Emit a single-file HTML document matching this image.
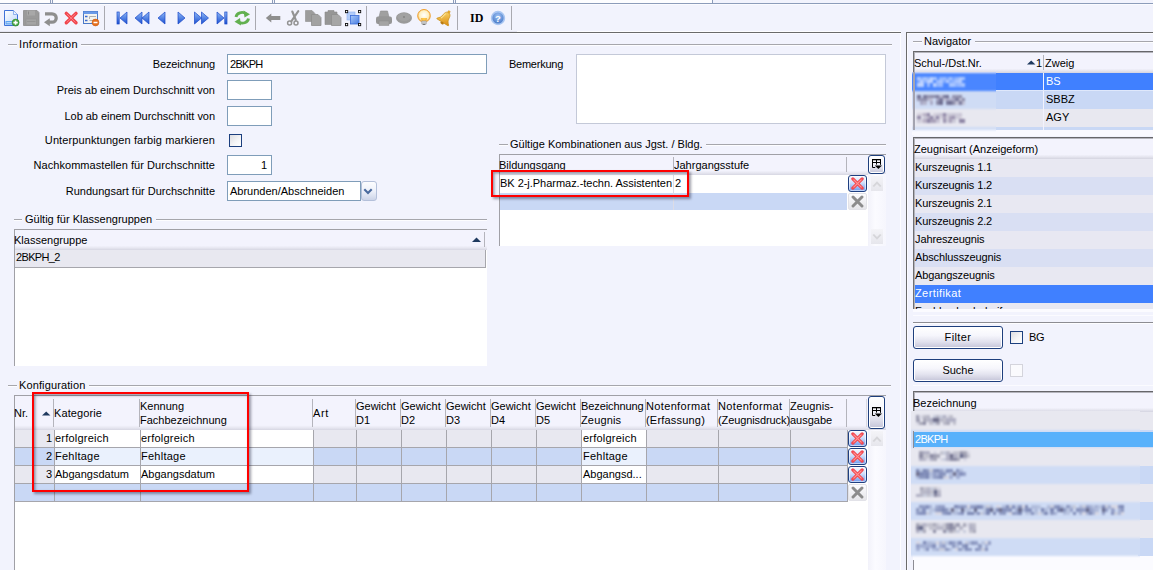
<!DOCTYPE html>
<html lang="de">
<head>
<meta charset="utf-8">
<title>Zeugnisart</title>
<style>
html,body{margin:0;padding:0;}
body{width:1153px;height:570px;overflow:hidden;background:#f2f3fd;position:relative;
 font-family:"Liberation Sans",sans-serif;font-size:11px;color:#000;line-height:13px;}
div,span{box-sizing:border-box;}
.a{position:absolute;}
.t{position:absolute;white-space:nowrap;height:13px;line-height:13px;}
.r{text-align:right;}
.hl{position:absolute;height:1px;background:#a6a6ac;}
.gl{box-shadow:0 1px 0 #fdfdff;}
.vl{position:absolute;width:1px;background:#a6a6ac;}
.inp{position:absolute;background:#fff;border:1px solid #7f9db9;}
.tsep{position:absolute;top:6px;width:1px;height:24px;background:#a9a9b0;}
.ic{position:absolute;top:10px;width:16px;height:16px;}
.gray{background:#e8e8f0;}
.blue{background:#c9d8f5;}
.hs{position:absolute;width:1px;background:#b4b4bc;}
.btn{position:absolute;border:1px solid #1e3f7d;border-radius:3px;background:linear-gradient(#ffffff 0%,#f6f6fc 40%,#e2e2ee 70%,#c4c4d8 100%);text-align:center;box-shadow:inset 0 0 0 1px #fff;}
.cb{position:absolute;width:13px;height:13px;border:1px solid #1c3f7e;background:linear-gradient(135deg,#dcdce0 0%,#f4f4f6 55%,#ffffff 100%);}
.del{position:absolute;width:19px;height:17px;border:1px solid #1f3f80;border-radius:3px;background:linear-gradient(#f6f9ff 0%,#d0dffb 45%,#6c9aee 100%);box-shadow:inset 0 0 0 1px rgba(255,255,255,.55);}
.red{position:absolute;border:2px solid #ff0000;box-shadow:1.5px 1.5px 2.5px rgba(0,0,30,.38),inset 1.5px 1.5px 2.5px rgba(0,0,30,.38);}
.deld{position:absolute;width:19px;height:17px;border:1px solid #e2e2e8;border-radius:2px;background:linear-gradient(#fcfcfe,#e6e6ea);}
.sarr{position:absolute;width:12px;height:15px;background:linear-gradient(#f4f4f8,#e6e6ec);}
.blur{position:absolute;filter:blur(0.8px);opacity:.85;}
</style>
</head>
<body>

<svg width="0" height="0" style="position:absolute"><defs>
<g id="xr"><path d="M2 2 L12 12 M12 2 L2 12" stroke="#f24a52" stroke-width="3.5" stroke-linecap="round"/><path d="M3 3 L11 11 M11 3 L3 11" stroke="#ff9494" stroke-width="1.2" stroke-linecap="round"/></g>
<g id="xg"><path d="M2.2 2.2 L11.8 11.8 M11.8 2.2 L2.2 11.8" stroke="#8c8c8c" stroke-width="3.2" stroke-linecap="round"/></g>
<g id="cfgi"><path d="M0.5 0.5 H8.5 V5.8 M0.5 0.5 V8.5 H3.2 M0.5 3.5 H8.5 M4.5 0.5 V5.6" fill="none" stroke="#000" stroke-width="1"/><path d="M0 0 H9 V1.3 H0 Z" fill="#000"/><path d="M2.8 6.4 H10 L6.4 10 Z" fill="#000"/></g>
</defs></svg>
<!-- top strip -->
<div class="a" style="left:0;top:0;width:712px;height:3px;background:#fdfdff;"></div>
<div class="a" style="left:0;top:3px;width:1153px;height:1px;background:#8c9cba;"></div>
<div class="a" style="left:0;top:4px;width:1153px;height:1px;background:#fbfbff;"></div>
<div class="a" style="left:50px;top:0;width:3px;height:3px;background:#f6f6fe;border-left:1px solid #8c9cba;border-right:1px solid #8c9cba;"></div>
<div class="a" style="left:272px;top:0;width:3px;height:3px;background:#f6f6fe;border-left:1px solid #8c9cba;border-right:1px solid #8c9cba;"></div>
<div class="a" style="left:453px;top:0;width:3px;height:3px;background:#f6f6fe;border-left:1px solid #8c9cba;border-right:1px solid #8c9cba;"></div>
<div class="a" style="left:712px;top:0;width:1px;height:3px;background:#8c9cba;"></div>

<!-- TOOLBAR -->
<div id="toolbar">
<svg class="a" style="left:0;top:4px;" width="520" height="28" viewBox="0 4 520 28">
<defs>
<linearGradient id="gb" x1="0" y1="0" x2="0" y2="1"><stop offset="0" stop-color="#8fbaf8"/><stop offset="1" stop-color="#1b4fd0"/></linearGradient>
<linearGradient id="gdoc" x1="0" y1="0" x2="1" y2="1"><stop offset="0" stop-color="#ffffff"/><stop offset="1" stop-color="#bcd6fa"/></linearGradient>
<linearGradient id="ggold" x1="0" y1="0" x2="1" y2="1"><stop offset="0" stop-color="#ffe27a"/><stop offset="1" stop-color="#d98a10"/></linearGradient>
<radialGradient id="gbulb" cx="0.5" cy="0.45" r="0.6"><stop offset="0" stop-color="#ffffff"/><stop offset="0.6" stop-color="#fff0c0"/><stop offset="1" stop-color="#f0a838"/></radialGradient>
<radialGradient id="ghelp" cx="0.5" cy="0.35" r="0.7"><stop offset="0" stop-color="#9cc0f4"/><stop offset="1" stop-color="#3d6fc0"/></radialGradient>
<linearGradient id="gsel" x1="0" y1="0" x2="1" y2="1"><stop offset="0" stop-color="#a8c8fa"/><stop offset="1" stop-color="#4a7ee0"/></linearGradient>
</defs>
<rect x="104" y="6" width="1" height="24" fill="#a9a9b0"/>
<rect x="255" y="6" width="1" height="24" fill="#a9a9b0"/>
<rect x="366" y="6" width="1" height="24" fill="#a9a9b0"/>
<rect x="457" y="6" width="1" height="24" fill="#a9a9b0"/>
<rect x="511" y="6" width="1" height="24" fill="#a9a9b0"/>
<path d="M4.5 10.5 H13.5 L17.5 14.5 V25.5 H4.5 Z" fill="url(#gdoc)" stroke="#3f72d8" stroke-width="1"/>
<path d="M13.5 10.5 V14.5 H17.5" fill="#eaf2ff" stroke="#6a98e8" stroke-width="0.7"/>
<rect x="5.5" y="21" width="9" height="3.5" fill="#5fa4f2"/>
<rect x="6.5" y="22.3" width="6" height="0.9" fill="#d8eaff"/>
<circle cx="15.6" cy="22.6" r="3.5" fill="#46a440" stroke="#2f8a2c" stroke-width="0.6"/>
<path d="M13.4 22.6 H17.8 M15.6 20.4 V24.8" stroke="#fff" stroke-width="1.6"/>
<path d="M23.5 10.5 H37 L39 12.5 V25.5 H23.5 Z" fill="#9a9a9a" stroke="#8c8c8c" stroke-width="0.8"/>
<rect x="27" y="10.5" width="8" height="5" fill="#a8a8a8"/>
<rect x="28" y="11.5" width="1" height="3" fill="#8a8a8a"/>
<rect x="26" y="19" width="10.5" height="6" fill="#a4a4a4" stroke="#929292" stroke-width="0.6"/>
<path d="M27 21.5 H35.5" stroke="#929292" stroke-width="0.8"/>
<path d="M45 13.8 H52 A4.2 4.2 0 0 1 52 22.2 H49" fill="none" stroke="#8e8e8e" stroke-width="3.3"/>
<path d="M44 22.2 L49.8 18.2 V26.2 Z" fill="#8e8e8e"/>
<path d="M66.3 13.4 L76 22.8 M76 13.4 L66.3 22.8" stroke="#f0434a" stroke-width="3.4" stroke-linecap="round"/>
<path d="M67 14 L75.3 22.2 M75.3 14 L67 22.2" stroke="#ff8088" stroke-width="1" stroke-linecap="round"/>
<rect x="83.5" y="11.5" width="14" height="12" fill="#f4f4f0" stroke="#4a78c8" stroke-width="1"/>
<rect x="83.5" y="11.5" width="14" height="2.5" fill="#6a9ae8"/>
<path d="M85 16.5 H87.5 M85 20.5 H87.5" stroke="#3a68d0" stroke-width="1.3"/>
<path d="M89.5 16.5 H96 M89.5 16.5 V19 M89.5 20.5 H94" stroke="#b0b0b0" stroke-width="1"/>
<circle cx="95.5" cy="22.5" r="3.4" fill="#e8701c" stroke="#c85a10" stroke-width="0.6"/>
<path d="M93.5 22.5 H97.5" stroke="#fff" stroke-width="1.5"/>
<rect x="117" y="12" width="2.2" height="12" fill="url(#gb)" stroke="#1a48c8" stroke-width="0.7"/>
<path d="M127 12 L120 18 L127 24 Z" fill="url(#gb)" stroke="#1a48c8" stroke-width="0.7"/>
<path d="M142 12 L135 18 L142 24 Z" fill="url(#gb)" stroke="#1a48c8" stroke-width="0.7"/>
<path d="M149 12 L142 18 L149 24 Z" fill="url(#gb)" stroke="#1a48c8" stroke-width="0.7"/>
<path d="M165 12 L158 18 L165 24 Z" fill="url(#gb)" stroke="#1a48c8" stroke-width="0.7"/>
<path d="M178 12 L185 18 L178 24 Z" fill="url(#gb)" stroke="#1a48c8" stroke-width="0.7"/>
<path d="M194.5 12 L201.5 18 L194.5 24 Z" fill="url(#gb)" stroke="#1a48c8" stroke-width="0.7"/>
<path d="M201.5 12 L208.5 18 L201.5 24 Z" fill="url(#gb)" stroke="#1a48c8" stroke-width="0.7"/>
<path d="M217 12 L224 18 L217 24 Z" fill="url(#gb)" stroke="#1a48c8" stroke-width="0.7"/>
<rect x="224.8" y="12" width="2.2" height="12" fill="url(#gb)" stroke="#1a48c8" stroke-width="0.7"/>
<path d="M236 17 A6 5 0 0 1 246 13.8" fill="none" stroke="#62b050" stroke-width="2.8"/>
<path d="M243.5 10.5 L250 14.2 L244.5 17.5 Z" fill="#62b050"/>
<path d="M248.5 18.5 A6 5 0 0 1 238.5 21.8" fill="none" stroke="#62b050" stroke-width="2.8"/>
<path d="M241 25.5 L234.5 21.8 L240 18 Z" fill="#62b050"/>
<path d="M265.8 18 L271.3 13.6 V16.1 H280.3 V19.9 H271.3 V22.4 Z" fill="#8e8e8e"/>
<path d="M298.3 11.2 L291.3 21.3 M292.3 11.5 L295.8 20" stroke="#939393" stroke-width="2.1" fill="none" stroke-linecap="round"/>
<circle cx="289.6" cy="22.9" r="2" fill="none" stroke="#939393" stroke-width="1.5"/>
<circle cx="296" cy="22.9" r="2" fill="none" stroke="#939393" stroke-width="1.5"/>
<path d="M305.5 10.5 H312 L315 13.5 V21.5 H305.5 Z" fill="#9c9c9c" stroke="#8e8e8e" stroke-width="0.6"/>
<path d="M311.5 14.5 H318 L321 17.5 V25.5 H311.5 Z" fill="#a2a2a2" stroke="#8e8e8e" stroke-width="0.8"/>
<path d="M325 12 H328 V10.5 H334 V12 H337 V24.5 H325 Z" fill="#969696" stroke="#8a8a8a" stroke-width="0.6"/>
<path d="M331.5 14.5 H338 L341 17.5 V25.5 H331.5 Z" fill="#a6a6a6" stroke="#8e8e8e" stroke-width="0.8"/>
<rect x="347" y="12" width="8" height="8" fill="#b4cdf8" stroke="#8ab0f0" stroke-width="0.6"/>
<rect x="350.5" y="15.5" width="8.5" height="8.5" fill="url(#gsel)" stroke="#3a6cd8" stroke-width="0.8"/>
<rect x="345.5" y="10.5" width="2.2" height="2.2" fill="#fff" stroke="#111" stroke-width="0.9"/>
<rect x="358.5" y="10.5" width="2.2" height="2.2" fill="#fff" stroke="#111" stroke-width="0.9"/>
<rect x="345.5" y="23.5" width="2.2" height="2.2" fill="#fff" stroke="#111" stroke-width="0.9"/>
<rect x="358.5" y="23.5" width="2.2" height="2.2" fill="#fff" stroke="#111" stroke-width="0.9"/>
<path d="M379 17 L380.5 11 H387.5 L389 17 Z" fill="#a0a0a0" stroke="#8e8e8e" stroke-width="0.6"/>
<rect x="376" y="16.5" width="16" height="7.5" rx="2" fill="#969696"/>
<rect x="379" y="21" width="10" height="4.5" fill="#a4a4a4" stroke="#8c8c8c" stroke-width="0.5"/>
<ellipse cx="404" cy="18" rx="8" ry="5.8" fill="#9a9a9a"/>
<ellipse cx="404" cy="17" rx="6.5" ry="4" fill="#a2a2a2"/>
<circle cx="404" cy="17" r="0.9" fill="#808080"/>
<circle cx="424" cy="15.8" r="6.3" fill="url(#gbulb)" stroke="#f0a030" stroke-width="1"/>
<path d="M421.5 18 L422 21 H426 L426.5 18" fill="#ffc84a" stroke="#e89820" stroke-width="0.6"/>
<rect x="421.8" y="21" width="4.4" height="3" fill="#c8c8c8" stroke="#9a9a9a" stroke-width="0.5"/>
<rect x="422.6" y="24" width="2.8" height="1" fill="#777"/>
<g transform="translate(445.3 17.8) rotate(32) scale(0.9) translate(-443.5 -17.5)"><path d="M443.5 10.8 C440.6 10.8 439.8 13.2 439.6 16 C439.4 18.8 438.2 20.6 436 22.4 V23.4 H451 V22.4 C448.8 20.6 447.6 18.8 447.4 16 C447.2 13.2 446.4 10.8 443.5 10.8 Z" fill="url(#ggold)" stroke="#c98c16" stroke-width="0.7"/><circle cx="443.5" cy="9.8" r="1.3" fill="#eeb030" stroke="#c98c16" stroke-width="0.5"/><ellipse cx="443.5" cy="24.2" rx="2.1" ry="1.3" fill="#b87a10"/><path d="M441.3 13.5 C440.9 15.5 440.8 18 439.6 20.4" fill="none" stroke="#fff3b8" stroke-width="1.1" opacity=".8"/></g>
<circle cx="498" cy="18" r="6.4" fill="url(#ghelp)" stroke="#a9c6f2" stroke-width="1.6"/>
<text x="498" y="21.6" font-family="Liberation Sans, sans-serif" font-size="9.5" font-weight="bold" fill="#fff" text-anchor="middle">?</text>
</svg>
<div class="t" style="left:470px;top:11px;font-family:'Liberation Serif',serif;font-weight:bold;font-size:12px;line-height:14px;height:14px;">ID</div>
</div>

<!-- toolbar bottom line -->
<div class="a" style="left:0;top:31px;width:517px;height:1px;background:#e6e6f2;"></div>
<div class="a" style="left:517px;top:31px;width:384px;height:1px;background:#fdfdff;"></div>
<div class="a" style="left:0;top:32px;width:901px;height:1px;background:#6a6a6a;"></div>
<div class="a" style="left:0;top:33px;width:900px;height:1px;background:#fafaff;"></div>
<div class="a" style="left:906px;top:32px;width:247px;height:1px;background:#6a6a6a;"></div>

<!-- LEFT MAIN -->
<div id="main">
<!-- Information group -->
<div class="hl gl" style="left:8px;top:44px;width:9px;"></div>
<div class="t" style="left:19px;top:38px;letter-spacing:0.35px;">Information</div>
<div class="hl gl" style="left:81px;top:44px;width:811px;"></div>

<div class="t r" style="left:0;width:215px;top:58px;letter-spacing:-0.12px;">Bezeichnung</div>
<div class="inp" style="left:227px;top:54px;width:260px;height:20px;"></div>
<div class="t" style="left:230px;top:58px;letter-spacing:-0.7px;">2BKPH</div>

<div class="t r" style="left:0;width:215px;top:84px;">Preis ab einem Durchschnitt von</div>
<div class="inp" style="left:227px;top:80px;width:45px;height:20px;"></div>

<div class="t r" style="left:0;width:215px;top:110px;letter-spacing:-0.04px;">Lob ab einem Durchschnitt von</div>
<div class="inp" style="left:227px;top:106px;width:45px;height:20px;"></div>

<div class="t r" style="left:0;width:215px;top:134px;letter-spacing:0.1px;">Unterpunktungen farbig markieren</div>
<div class="cb" style="left:229px;top:134px;"></div>

<div class="t r" style="left:0;width:215px;top:159px;letter-spacing:0.05px;">Nachkommastellen für Durchschnitte</div>
<div class="inp" style="left:227px;top:155px;width:45px;height:20px;"></div>
<div class="t r" style="left:227px;width:40px;top:159px;">1</div>

<div class="t r" style="left:0;width:215px;top:185px;">Rundungsart für Durchschnitte</div>
<div class="inp" style="left:227px;top:181px;width:134px;height:20px;"></div>
<div class="t" style="left:230px;top:185px;">Abrunden/Abschneiden</div>
<div class="a" style="left:361px;top:181px;width:16px;height:20px;border:1px solid #b4c0da;border-radius:3px;background:linear-gradient(#fdfdff 0%,#eef1fa 50%,#ccd4e8 100%);"></div>
<svg class="a" style="left:363px;top:187px;" width="11" height="9" viewBox="0 0 11 9"><path d="M1.3 2.2 L5 6 L8.7 2.2" fill="none" stroke="#4a6a9e" stroke-width="2.1"/></svg>

<!-- Bemerkung -->
<div class="t" style="left:509px;top:58px;letter-spacing:-0.25px;">Bemerkung</div>
<div class="inp" style="left:576px;top:54px;width:310px;height:70px;border-color:#c4c9d8;"></div>

<!-- Gültig für Klassengruppen -->
<div class="hl gl" style="left:14px;top:219px;width:8px;"></div>
<div class="t" style="left:25px;top:213px;">Gültig für Klassengruppen</div>
<div class="hl gl" style="left:156px;top:219px;width:331px;"></div>

<div class="a" style="left:14px;top:229px;width:473px;height:137px;background:#fff;border-left:1px solid #a0a0a6;border-top:1px solid #a0a0a6;"></div>
<div class="a" style="left:15px;top:230px;width:472px;height:20px;background:linear-gradient(#f3f3fd 0%,#f3f3fd 78%,#e6e6f0 90%,#d6d6e2 100%);"></div>
<div class="t" style="left:14px;top:234px;">Klassengruppe</div>
<svg class="a" style="left:472px;top:237px;" width="9" height="5" viewBox="0 0 9 5"><path d="M0 5 L4.5 0.5 L9 5 Z" fill="#1f3a5f"/></svg>
<div class="hs" style="left:484px;top:232px;height:15px;"></div>
<div class="a gray" style="left:15px;top:250px;width:471px;height:18px;border-right:1px solid #a6a6ac;border-bottom:1px solid #a6a6ac;"></div>
<div class="t" style="left:16px;top:251px;letter-spacing:-0.65px;">2BKPH_2</div>

<!-- Gültige Kombinationen -->
<div class="hl gl" style="left:499px;top:144px;width:9px;"></div>
<div class="t" style="left:510px;top:138px;">Gültige Kombinationen aus Jgst. / Bldg.</div>
<div class="hl gl" style="left:706px;top:144px;width:180px;"></div>

<div class="a" style="left:499px;top:154px;width:387px;height:92px;background:#fff;border-left:1px solid #a0a0a6;border-top:1px solid #a0a0a6;"></div>
<div class="a" style="left:500px;top:155px;width:386px;height:20px;background:linear-gradient(#f3f3fd 0%,#f3f3fd 78%,#e6e6f0 90%,#d6d6e2 100%);"></div>
<div class="t" style="left:499px;top:159px;">Bildungsgang</div>
<div class="t" style="left:674px;top:159px;">Jahrgangsstufe</div>
<div class="hs" style="left:673px;top:157px;height:15px;"></div>
<div class="hs" style="left:846px;top:157px;height:15px;"></div>
<!-- rows -->
<div class="a" style="left:500px;top:175px;width:348px;height:18px;background:#fff;"></div>
<div class="a" style="left:500px;top:193px;width:347px;height:17px;background:#c9d8f5;"></div>
<div class="vl" style="left:673px;top:175px;height:35px;background:#dcdce6;"></div>
<div class="t" style="left:500px;top:177px;letter-spacing:-0.03px;">BK 2-j.Pharmaz.-techn. Assistenten</div>
<div class="t" style="left:675px;top:177px;">2</div>
<!-- scrollbar col -->
<div class="a" style="left:868px;top:174px;width:18px;height:72px;background:linear-gradient(90deg,#f2f2fa,#fbfbff 40%,#f6f6fd);"></div>
<div class="sarr" style="left:871px;top:176px;"></div>
<svg class="a" style="left:872px;top:179px;" width="10" height="9" viewBox="0 0 10 9"><path d="M0.5 7 L5 2.2 L9.5 7 L8 8 L5 5 L2 8 Z" fill="#d6d6da"/></svg>
<div class="sarr" style="left:871px;top:229px;"></div>
<svg class="a" style="left:872px;top:233px;" width="10" height="9" viewBox="0 0 10 9"><path d="M0.5 2 L5 6.8 L9.5 2 L8 1 L5 4 L2 1 Z" fill="#d6d6da"/></svg>
<!-- delete buttons -->
<div class="del" style="left:848px;top:175px;"></div>
<svg class="a" style="left:851px;top:177px;" width="13" height="13" viewBox="0 0 14 14"><use href="#xr"/></svg>
<div class="deld" style="left:848px;top:193px;"></div>
<svg class="a" style="left:851px;top:195px;" width="13" height="13" viewBox="0 0 14 14"><use href="#xg"/></svg>
<!-- config button -->
<div class="btn" style="left:868px;top:155px;width:17px;height:19px;"></div>
<svg class="a" style="left:872px;top:159px;" width="10" height="11" viewBox="0 0 10 11"><use href="#cfgi"/></svg>
<!-- red box 1 -->
<div class="red" style="left:491px;top:170px;width:198px;height:27px;"></div>

<!-- Konfiguration -->
<div class="hl gl" style="left:8px;top:385px;width:9px;"></div>
<div class="t" style="left:19px;top:379px;letter-spacing:0.12px;">Konfiguration</div>
<div class="hl gl" style="left:89px;top:385px;width:802px;"></div>

<div class="a" style="left:14px;top:395px;width:872px;height:175px;background:#fff;border-left:1px solid #a0a0a6;border-top:1px solid #a0a0a6;"></div>
<div class="a" style="left:15px;top:396px;width:871px;height:34px;background:linear-gradient(#f3f3fd 0%,#f3f3fd 86%,#e6e6f0 94%,#d6d6e2 100%);"></div>
<div id="cfg">
<div class="hs" style="left:53px;top:399px;height:28px;"></div>
<div class="hs" style="left:139px;top:399px;height:28px;"></div>
<div class="hs" style="left:312px;top:399px;height:28px;"></div>
<div class="hs" style="left:355px;top:399px;height:28px;"></div>
<div class="hs" style="left:400px;top:399px;height:28px;"></div>
<div class="hs" style="left:445px;top:399px;height:28px;"></div>
<div class="hs" style="left:490px;top:399px;height:28px;"></div>
<div class="hs" style="left:535px;top:399px;height:28px;"></div>
<div class="hs" style="left:580px;top:399px;height:28px;"></div>
<div class="hs" style="left:645px;top:399px;height:28px;"></div>
<div class="hs" style="left:717px;top:399px;height:28px;"></div>
<div class="hs" style="left:789px;top:399px;height:28px;"></div>
<div class="hs" style="left:846px;top:399px;height:28px;"></div>
<div class="hs" style="left:866px;top:399px;height:28px;background:#d8d8e0;"></div>
<div class="t" style="left:14px;top:407px;letter-spacing:0px;">Nr.</div>
<svg class="a" style="left:42px;top:411px;" width="9" height="5" viewBox="0 0 9 5"><path d="M0 4.6 L4.2 0.4 L8.4 4.6 Z" fill="#1f3a5f"/></svg>
<div class="t" style="left:54px;top:407px;letter-spacing:0.1px;">Kategorie</div>
<div class="t" style="left:140px;top:400px;">Kennung</div>
<div class="t" style="left:140px;top:414px;">Fachbezeichnung</div>
<div class="t" style="left:313px;top:407px;letter-spacing:0.6px;">Art</div>
<div class="t" style="left:356px;top:400px;">Gewicht</div>
<div class="t" style="left:356px;top:414px;">D1</div>
<div class="t" style="left:401px;top:400px;">Gewicht</div>
<div class="t" style="left:401px;top:414px;">D2</div>
<div class="t" style="left:446px;top:400px;">Gewicht</div>
<div class="t" style="left:446px;top:414px;">D3</div>
<div class="t" style="left:491px;top:400px;">Gewicht</div>
<div class="t" style="left:491px;top:414px;">D4</div>
<div class="t" style="left:536px;top:400px;">Gewicht</div>
<div class="t" style="left:536px;top:414px;">D5</div>
<div class="t" style="left:581px;top:400px;letter-spacing:-0.1px;">Bezeichnung</div>
<div class="t" style="left:581px;top:414px;letter-spacing:0.15px;">Zeugnis</div>
<div class="t" style="left:646px;top:400px;letter-spacing:0.35px;">Notenformat</div>
<div class="t" style="left:646px;top:414px;letter-spacing:0.2px;">(Erfassung)</div>
<div class="t" style="left:718px;top:400px;letter-spacing:0.35px;">Notenformat</div>
<div class="t" style="left:718px;top:414px;letter-spacing:-0.1px;">(Zeugnisdruck)</div>
<div class="t" style="left:790px;top:400px;letter-spacing:0.1px;">Zeugnis-</div>
<div class="t" style="left:790px;top:414px;">ausgabe</div>
<div class="a" style="left:15px;top:430px;width:833px;height:17px;background:#e8e8f0;"></div>
<div class="a" style="left:55px;top:430px;width:85px;height:17px;background:#ffffff;"></div>
<div class="a" style="left:141px;top:430px;width:172px;height:17px;background:#ffffff;"></div>
<div class="a" style="left:582px;top:430px;width:64px;height:17px;background:#ffffff;"></div>
<div class="t r" style="left:15px;width:37px;top:432px;">1</div>
<div class="t" style="left:55px;top:432px;letter-spacing:0.22px;">erfolgreich</div>
<div class="t" style="left:141px;top:432px;letter-spacing:0.22px;">erfolgreich</div>
<div class="t" style="left:583px;top:432px;letter-spacing:0.22px;">erfolgreich</div>
<div class="hl" style="left:15px;top:447px;width:833px;"></div>
<div class="a" style="left:15px;top:448px;width:833px;height:17px;background:#c9d8f5;"></div>
<div class="a" style="left:55px;top:448px;width:85px;height:17px;background:#eaf1fd;"></div>
<div class="a" style="left:141px;top:448px;width:172px;height:17px;background:#eaf1fd;"></div>
<div class="a" style="left:582px;top:448px;width:64px;height:17px;background:#eaf1fd;"></div>
<div class="t r" style="left:15px;width:37px;top:450px;">2</div>
<div class="t" style="left:55px;top:450px;letter-spacing:0.25px;">Fehltage</div>
<div class="t" style="left:141px;top:450px;letter-spacing:0.25px;">Fehltage</div>
<div class="t" style="left:583px;top:450px;letter-spacing:0.25px;">Fehltage</div>
<div class="hl" style="left:15px;top:465px;width:833px;"></div>
<div class="a" style="left:15px;top:466px;width:833px;height:17px;background:#e8e8f0;"></div>
<div class="a" style="left:55px;top:466px;width:85px;height:17px;background:#ffffff;"></div>
<div class="a" style="left:141px;top:466px;width:172px;height:17px;background:#ffffff;"></div>
<div class="a" style="left:582px;top:466px;width:64px;height:17px;background:#ffffff;"></div>
<div class="t r" style="left:15px;width:37px;top:468px;">3</div>
<div class="t" style="left:55px;top:468px;letter-spacing:0px;">Abgangsdatum</div>
<div class="t" style="left:141px;top:468px;letter-spacing:0px;">Abgangsdatum</div>
<div class="t" style="left:583px;top:468px;letter-spacing:0px;">Abgangsd...</div>
<div class="hl" style="left:15px;top:483px;width:833px;"></div>
<div class="a" style="left:15px;top:484px;width:833px;height:17px;background:#c9d8f5;"></div>
<div class="hl" style="left:15px;top:501px;width:833px;"></div>
<div class="vl" style="left:54px;top:430px;height:72px;"></div>
<div class="vl" style="left:140px;top:430px;height:72px;"></div>
<div class="vl" style="left:313px;top:430px;height:72px;"></div>
<div class="vl" style="left:356px;top:430px;height:72px;"></div>
<div class="vl" style="left:401px;top:430px;height:72px;"></div>
<div class="vl" style="left:446px;top:430px;height:72px;"></div>
<div class="vl" style="left:491px;top:430px;height:72px;"></div>
<div class="vl" style="left:536px;top:430px;height:72px;"></div>
<div class="vl" style="left:581px;top:430px;height:72px;"></div>
<div class="vl" style="left:646px;top:430px;height:72px;"></div>
<div class="vl" style="left:718px;top:430px;height:72px;"></div>
<div class="vl" style="left:790px;top:430px;height:72px;"></div>
<div class="vl" style="left:847px;top:430px;height:72px;"></div>
<div class="a" style="left:868px;top:430px;width:18px;height:140px;background:linear-gradient(90deg,#f2f2fa,#fbfbff 40%,#f6f6fd);"></div>
<div class="sarr" style="left:871px;top:431px;"></div>
<svg class="a" style="left:872px;top:434px;" width="10" height="9" viewBox="0 0 10 9"><path d="M0.5 7 L5 2.2 L9.5 7 L8 8 L5 5 L2 8 Z" fill="#d6d6da"/></svg>
<div class="del" style="left:848px;top:430px;"></div>
<svg class="a" style="left:851px;top:432px;" width="13" height="13" viewBox="0 0 14 14"><use href="#xr"/></svg>
<div class="del" style="left:848px;top:448px;"></div>
<svg class="a" style="left:851px;top:450px;" width="13" height="13" viewBox="0 0 14 14"><use href="#xr"/></svg>
<div class="del" style="left:848px;top:466px;"></div>
<svg class="a" style="left:851px;top:468px;" width="13" height="13" viewBox="0 0 14 14"><use href="#xr"/></svg>
<div class="deld" style="left:848px;top:484px;"></div>
<svg class="a" style="left:851px;top:486px;" width="13" height="13" viewBox="0 0 14 14"><use href="#xg"/></svg>
<div class="btn" style="left:868px;top:396px;width:17px;height:33px;"></div>
<svg class="a" style="left:872px;top:407px;" width="10" height="11" viewBox="0 0 10 11"><use href="#cfgi"/></svg>
<div class="red" style="left:32px;top:392px;width:217px;height:100px;"></div>
</div>
</div>


<!-- RIGHT PANEL -->
<div id="right">
<div class="a" style="left:900px;top:33px;width:1px;height:537px;background:#fdfdff;"></div>
<div class="a" style="left:906px;top:32px;width:1px;height:538px;background:#6b6b6b;"></div>
<div class="a" style="left:907px;top:33px;width:1px;height:537px;background:#fbfbff;"></div>
<div class="a" style="left:907px;top:33px;width:246px;height:1px;background:#fbfbff;"></div>
<div class="hl gl" style="left:913px;top:41px;width:9px;"></div>
<div class="t" style="left:924px;top:35px;">Navigator</div>
<div class="hl gl" style="left:975px;top:41px;width:178px;"></div>
<div class="a" style="left:913px;top:51px;width:240px;height:79px;background:#fbfbff;border-left:1px solid #707074;border-top:1px solid #66666a;box-shadow:inset 1px 1px 0 #b4b4bc;"></div>
<div class="a" style="left:914px;top:130px;width:239px;height:6px;background:#f9f9ff;"></div>
<div class="a" style="left:915px;top:53px;width:238px;height:20px;background:linear-gradient(#f3f3fd 0%,#f3f3fd 78%,#e4e4ee 90%,#d4d4e0 100%);"></div>
<div class="t" style="left:914px;top:57px;">Schul-/Dst.Nr.</div>
<svg class="a" style="left:1027px;top:60px;" width="9" height="5" viewBox="0 0 9 5"><path d="M0 4.6 L4.2 0.4 L8.4 4.6 Z" fill="#1f3a5f"/></svg>
<div class="t" style="left:1036px;top:57px;">1</div>
<div class="hs" style="left:1043px;top:55px;height:15px;"></div>
<div class="t" style="left:1045px;top:57px;">Zweig</div>
<div class="a" style="left:915px;top:73px;width:238px;height:18px;background:#4080ff;"></div>
<div class="a" style="left:1043px;top:73px;width:1px;height:18px;background:#f2f2fc;"></div>
<div class="t" style="left:1046px;top:75px;color:#fff;">BS</div>
<div class="a" style="left:915px;top:91px;width:238px;height:18px;background:#c9d8f5;"></div>
<div class="a" style="left:1043px;top:91px;width:1px;height:18px;background:#f2f2fc;"></div>
<div class="t" style="left:1046px;top:93px;color:#000;">SBBZ</div>
<div class="a" style="left:915px;top:109px;width:238px;height:18px;background:#e8e8f0;"></div>
<div class="a" style="left:1043px;top:109px;width:1px;height:18px;background:#f2f2fc;"></div>
<div class="t" style="left:1046px;top:111px;color:#000;">AGY</div>
<div class="a" style="left:915px;top:90px;width:238px;height:1px;background:#dfe8fb;"></div>
<div class="a" style="left:915px;top:127px;width:238px;height:3px;background:#c9d8f5;"></div>
<div class="a" style="left:1043px;top:127px;width:1px;height:3px;background:#f2f2fc;"></div>
<div class="a" style="left:912px;top:72px;width:84px;height:63px;overflow:hidden;"><div class="a" style="left:0;top:0;width:84px;height:63px;filter:blur(0.9px);"><div class="a" style="left:-6px;top:-6px;width:100px;height:7px;background:#ececf6;"></div><div class="a" style="left:-6px;top:1px;width:100px;height:18px;background:#4a86ff;"></div><div class="a" style="left:-6px;top:19px;width:100px;height:18px;background:#cfdcf5;"></div><div class="a" style="left:-6px;top:37px;width:100px;height:18px;background:#e8e8f0;"></div><div class="a" style="left:-6px;top:55px;width:100px;height:3px;background:#cfdcf5;"></div><div class="a" style="left:-6px;top:58px;width:100px;height:12px;background:#f9f9ff;"></div><div class="a" style="left:5.0px;top:4.5px;width:3.5px;height:3.6px;background:#c0d4ff;"></div><div class="a" style="left:5.0px;top:7.8px;width:3.5px;height:3.6px;background:#7aa6ff;"></div><div class="a" style="left:5.0px;top:11.1px;width:3.5px;height:3.6px;background:#c0d4ff;"></div><div class="a" style="left:8.2px;top:4.5px;width:3.5px;height:3.6px;background:#8fb4ff;"></div><div class="a" style="left:8.2px;top:7.8px;width:3.5px;height:3.6px;background:#c0d4ff;"></div><div class="a" style="left:8.2px;top:11.1px;width:3.5px;height:3.6px;background:#c0d4ff;"></div><div class="a" style="left:11.4px;top:4.5px;width:3.5px;height:3.6px;background:#a9c6ff;"></div><div class="a" style="left:11.4px;top:7.8px;width:3.5px;height:3.6px;background:#8fb4ff;"></div><div class="a" style="left:14.6px;top:4.5px;width:3.5px;height:3.6px;background:#94b8ff;"></div><div class="a" style="left:14.6px;top:7.8px;width:3.5px;height:3.6px;background:#c0d4ff;"></div><div class="a" style="left:14.6px;top:11.1px;width:3.5px;height:3.6px;background:#9cbcff;"></div><div class="a" style="left:17.8px;top:4.5px;width:3.5px;height:3.6px;background:#c0d4ff;"></div><div class="a" style="left:17.8px;top:7.8px;width:3.5px;height:3.6px;background:#c0d4ff;"></div><div class="a" style="left:21.0px;top:4.5px;width:3.5px;height:3.6px;background:#a9c6ff;"></div><div class="a" style="left:21.0px;top:11.1px;width:3.5px;height:3.6px;background:#c0d4ff;"></div><div class="a" style="left:24.2px;top:7.8px;width:3.5px;height:3.6px;background:#9cbcff;"></div><div class="a" style="left:24.2px;top:11.1px;width:3.5px;height:3.6px;background:#8fb4ff;"></div><div class="a" style="left:27.4px;top:4.5px;width:3.5px;height:3.6px;background:#94b8ff;"></div><div class="a" style="left:27.4px;top:7.8px;width:3.5px;height:3.6px;background:#a9c6ff;"></div><div class="a" style="left:27.4px;top:11.1px;width:3.5px;height:3.6px;background:#9cbcff;"></div><div class="a" style="left:30.6px;top:4.5px;width:3.5px;height:3.6px;background:#9cbcff;"></div><div class="a" style="left:30.6px;top:7.8px;width:3.5px;height:3.6px;background:#7aa6ff;"></div><div class="a" style="left:33.8px;top:4.5px;width:3.5px;height:3.6px;background:#7aa6ff;"></div><div class="a" style="left:33.8px;top:7.8px;width:3.5px;height:3.6px;background:#b4ccff;"></div><div class="a" style="left:37.0px;top:4.5px;width:3.5px;height:3.6px;background:#a9c6ff;"></div><div class="a" style="left:37.0px;top:7.8px;width:3.5px;height:3.6px;background:#7aa6ff;"></div><div class="a" style="left:37.0px;top:11.1px;width:3.5px;height:3.6px;background:#a9c6ff;"></div><div class="a" style="left:40.2px;top:4.5px;width:3.5px;height:3.6px;background:#7aa6ff;"></div><div class="a" style="left:40.2px;top:7.8px;width:3.5px;height:3.6px;background:#8fb4ff;"></div><div class="a" style="left:40.2px;top:11.1px;width:3.5px;height:3.6px;background:#a9c6ff;"></div><div class="a" style="left:43.4px;top:4.5px;width:3.5px;height:3.6px;background:#94b8ff;"></div><div class="a" style="left:43.4px;top:7.8px;width:3.5px;height:3.6px;background:#a9c6ff;"></div><div class="a" style="left:43.4px;top:11.1px;width:3.5px;height:3.6px;background:#8fb4ff;"></div><div class="a" style="left:46.6px;top:4.5px;width:3.5px;height:3.6px;background:#b4ccff;"></div><div class="a" style="left:46.6px;top:7.8px;width:3.5px;height:3.6px;background:#b4ccff;"></div><div class="a" style="left:46.6px;top:11.1px;width:3.5px;height:3.6px;background:#9cbcff;"></div><div class="a" style="left:49.8px;top:4.5px;width:3.5px;height:3.6px;background:#a9c6ff;"></div><div class="a" style="left:49.8px;top:11.1px;width:3.5px;height:3.6px;background:#a9c6ff;"></div><div class="a" style="left:5.0px;top:22.5px;width:3.5px;height:3.6px;background:#6c6c90;"></div><div class="a" style="left:5.0px;top:25.8px;width:3.5px;height:3.6px;background:#9494b0;"></div><div class="a" style="left:8.2px;top:25.8px;width:3.5px;height:3.6px;background:#9494b0;"></div><div class="a" style="left:8.2px;top:29.1px;width:3.5px;height:3.6px;background:#a8a8c4;"></div><div class="a" style="left:11.4px;top:22.5px;width:3.5px;height:3.6px;background:#78789a;"></div><div class="a" style="left:11.4px;top:25.8px;width:3.5px;height:3.6px;background:#8c8ca8;"></div><div class="a" style="left:11.4px;top:29.1px;width:3.5px;height:3.6px;background:#b4b4cc;"></div><div class="a" style="left:14.6px;top:22.5px;width:3.5px;height:3.6px;background:#9494b0;"></div><div class="a" style="left:14.6px;top:25.8px;width:3.5px;height:3.6px;background:#b4b4cc;"></div><div class="a" style="left:17.8px;top:22.5px;width:3.5px;height:3.6px;background:#8c8ca8;"></div><div class="a" style="left:17.8px;top:25.8px;width:3.5px;height:3.6px;background:#c0c0d4;"></div><div class="a" style="left:17.8px;top:29.1px;width:3.5px;height:3.6px;background:#a8a8c4;"></div><div class="a" style="left:21.0px;top:22.5px;width:3.5px;height:3.6px;background:#8c8ca8;"></div><div class="a" style="left:24.2px;top:22.5px;width:3.5px;height:3.6px;background:#78789a;"></div><div class="a" style="left:24.2px;top:25.8px;width:3.5px;height:3.6px;background:#a8a8c4;"></div><div class="a" style="left:24.2px;top:29.1px;width:3.5px;height:3.6px;background:#8c8ca8;"></div><div class="a" style="left:27.4px;top:22.5px;width:3.5px;height:3.6px;background:#b4b4cc;"></div><div class="a" style="left:27.4px;top:25.8px;width:3.5px;height:3.6px;background:#78789a;"></div><div class="a" style="left:27.4px;top:29.1px;width:3.5px;height:3.6px;background:#6c6c90;"></div><div class="a" style="left:30.6px;top:22.5px;width:3.5px;height:3.6px;background:#78789a;"></div><div class="a" style="left:30.6px;top:25.8px;width:3.5px;height:3.6px;background:#c0c0d4;"></div><div class="a" style="left:33.8px;top:22.5px;width:3.5px;height:3.6px;background:#6c6c90;"></div><div class="a" style="left:33.8px;top:25.8px;width:3.5px;height:3.6px;background:#a8a8c4;"></div><div class="a" style="left:33.8px;top:29.1px;width:3.5px;height:3.6px;background:#78789a;"></div><div class="a" style="left:37.0px;top:25.8px;width:3.5px;height:3.6px;background:#b4b4cc;"></div><div class="a" style="left:37.0px;top:29.1px;width:3.5px;height:3.6px;background:#6c6c90;"></div><div class="a" style="left:40.2px;top:22.5px;width:3.5px;height:3.6px;background:#9494b0;"></div><div class="a" style="left:40.2px;top:25.8px;width:3.5px;height:3.6px;background:#a8a8c4;"></div><div class="a" style="left:40.2px;top:29.1px;width:3.5px;height:3.6px;background:#8c8ca8;"></div><div class="a" style="left:43.4px;top:22.5px;width:3.5px;height:3.6px;background:#9494b0;"></div><div class="a" style="left:43.4px;top:25.8px;width:3.5px;height:3.6px;background:#78789a;"></div><div class="a" style="left:43.4px;top:29.1px;width:3.5px;height:3.6px;background:#c0c0d4;"></div><div class="a" style="left:46.6px;top:22.5px;width:3.5px;height:3.6px;background:#8c8ca8;"></div><div class="a" style="left:46.6px;top:25.8px;width:3.5px;height:3.6px;background:#c0c0d4;"></div><div class="a" style="left:46.6px;top:29.1px;width:3.5px;height:3.6px;background:#78789a;"></div><div class="a" style="left:49.8px;top:25.8px;width:3.5px;height:3.6px;background:#8c8ca8;"></div><div class="a" style="left:49.8px;top:29.1px;width:3.5px;height:3.6px;background:#c0c0d4;"></div><div class="a" style="left:5.0px;top:40.5px;width:3.5px;height:3.6px;background:#d4d0dc;"></div><div class="a" style="left:5.0px;top:43.8px;width:3.5px;height:3.6px;background:#8c84a4;"></div><div class="a" style="left:5.0px;top:47.1px;width:3.5px;height:3.6px;background:#cccad8;"></div><div class="a" style="left:8.2px;top:40.5px;width:3.5px;height:3.6px;background:#d4d0dc;"></div><div class="a" style="left:8.2px;top:47.1px;width:3.5px;height:3.6px;background:#d4d0dc;"></div><div class="a" style="left:11.4px;top:40.5px;width:3.5px;height:3.6px;background:#b8b0c4;"></div><div class="a" style="left:11.4px;top:43.8px;width:3.5px;height:3.6px;background:#cccad8;"></div><div class="a" style="left:11.4px;top:47.1px;width:3.5px;height:3.6px;background:#b8b0c4;"></div><div class="a" style="left:14.6px;top:40.5px;width:3.5px;height:3.6px;background:#8c84a4;"></div><div class="a" style="left:14.6px;top:43.8px;width:3.5px;height:3.6px;background:#b8b0c4;"></div><div class="a" style="left:14.6px;top:47.1px;width:3.5px;height:3.6px;background:#8c84a4;"></div><div class="a" style="left:17.8px;top:43.8px;width:3.5px;height:3.6px;background:#8c84a4;"></div><div class="a" style="left:17.8px;top:47.1px;width:3.5px;height:3.6px;background:#a8a0b8;"></div><div class="a" style="left:21.0px;top:40.5px;width:3.5px;height:3.6px;background:#d4d0dc;"></div><div class="a" style="left:21.0px;top:43.8px;width:3.5px;height:3.6px;background:#cccad8;"></div><div class="a" style="left:21.0px;top:47.1px;width:3.5px;height:3.6px;background:#a8a0b8;"></div><div class="a" style="left:24.2px;top:40.5px;width:3.5px;height:3.6px;background:#cccad8;"></div><div class="a" style="left:24.2px;top:43.8px;width:3.5px;height:3.6px;background:#8c84a4;"></div><div class="a" style="left:24.2px;top:47.1px;width:3.5px;height:3.6px;background:#c8c4d4;"></div><div class="a" style="left:27.4px;top:40.5px;width:3.5px;height:3.6px;background:#c8c4d4;"></div><div class="a" style="left:27.4px;top:43.8px;width:3.5px;height:3.6px;background:#d4d0dc;"></div><div class="a" style="left:30.6px;top:40.5px;width:3.5px;height:3.6px;background:#8c84a4;"></div><div class="a" style="left:30.6px;top:43.8px;width:3.5px;height:3.6px;background:#a8a0b8;"></div><div class="a" style="left:30.6px;top:47.1px;width:3.5px;height:3.6px;background:#9890ac;"></div><div class="a" style="left:33.8px;top:40.5px;width:3.5px;height:3.6px;background:#cccad8;"></div><div class="a" style="left:33.8px;top:43.8px;width:3.5px;height:3.6px;background:#d4d0dc;"></div><div class="a" style="left:33.8px;top:47.1px;width:3.5px;height:3.6px;background:#cccad8;"></div><div class="a" style="left:37.0px;top:40.5px;width:3.5px;height:3.6px;background:#cccad8;"></div><div class="a" style="left:37.0px;top:43.8px;width:3.5px;height:3.6px;background:#a8a0b8;"></div><div class="a" style="left:37.0px;top:47.1px;width:3.5px;height:3.6px;background:#a8a0b8;"></div><div class="a" style="left:40.2px;top:40.5px;width:3.5px;height:3.6px;background:#c8c4d4;"></div><div class="a" style="left:40.2px;top:43.8px;width:3.5px;height:3.6px;background:#9890ac;"></div><div class="a" style="left:40.2px;top:47.1px;width:3.5px;height:3.6px;background:#cccad8;"></div><div class="a" style="left:43.4px;top:40.5px;width:3.5px;height:3.6px;background:#cccad8;"></div><div class="a" style="left:43.4px;top:43.8px;width:3.5px;height:3.6px;background:#cccad8;"></div><div class="a" style="left:46.6px;top:40.5px;width:3.5px;height:3.6px;background:#c8c4d4;"></div><div class="a" style="left:46.6px;top:43.8px;width:3.5px;height:3.6px;background:#d4d0dc;"></div><div class="a" style="left:46.6px;top:47.1px;width:3.5px;height:3.6px;background:#8c84a4;"></div><div class="a" style="left:49.8px;top:47.1px;width:3.5px;height:3.6px;background:#8c84a4;"></div></div></div>
<div class="a" style="left:913px;top:72px;width:2px;height:58px;background:#a4a4b0;"></div>
<div class="a" style="left:913px;top:137px;width:240px;height:172px;background:#fbfbff;border-left:1px solid #707074;border-top:1px solid #66666a;box-shadow:inset 1px 1px 0 #b4b4bc;"></div>
<div class="a" style="left:915px;top:139px;width:238px;height:20px;background:linear-gradient(#f3f3fd 0%,#f3f3fd 78%,#e4e4ee 90%,#d4d4e0 100%);"></div>
<div class="t" style="left:914px;top:143px;">Zeugnisart (Anzeigeform)</div>
<div class="a" style="left:915px;top:159px;width:238px;height:18px;background:#e8e8f2;"></div>
<div class="t" style="left:915px;top:161px;color:#000;letter-spacing:-0.12px;">Kurszeugnis 1.1</div>
<div class="a" style="left:915px;top:177px;width:238px;height:18px;background:#d9dff3;"></div>
<div class="t" style="left:915px;top:179px;color:#000;letter-spacing:-0.12px;">Kurszeugnis 1.2</div>
<div class="a" style="left:915px;top:195px;width:238px;height:18px;background:#e8e8f2;"></div>
<div class="t" style="left:915px;top:197px;color:#000;letter-spacing:-0.12px;">Kurszeugnis 2.1</div>
<div class="a" style="left:915px;top:213px;width:238px;height:18px;background:#d9dff3;"></div>
<div class="t" style="left:915px;top:215px;color:#000;letter-spacing:-0.12px;">Kurszeugnis 2.2</div>
<div class="a" style="left:915px;top:231px;width:238px;height:18px;background:#e8e8f2;"></div>
<div class="t" style="left:915px;top:233px;color:#000;letter-spacing:-0.12px;">Jahreszeugnis</div>
<div class="a" style="left:915px;top:249px;width:238px;height:18px;background:#d9dff3;"></div>
<div class="t" style="left:915px;top:251px;color:#000;letter-spacing:-0.12px;">Abschlusszeugnis</div>
<div class="a" style="left:915px;top:267px;width:238px;height:18px;background:#e8e8f2;"></div>
<div class="t" style="left:915px;top:269px;color:#000;letter-spacing:-0.12px;">Abgangszeugnis</div>
<div class="a" style="left:915px;top:285px;width:238px;height:18px;background:#4080ff;"></div>
<div class="t" style="left:915px;top:287px;color:#fff;letter-spacing:0.4px;">Zertifikat</div>
<div class="a" style="left:915px;top:303px;width:238px;height:6px;overflow:hidden;background:#e8e8f2;"><div class="t" style="left:0px;top:2px;letter-spacing:-0.12px;">Fachhochschulreife</div></div>
<div class="a" style="left:913px;top:309px;width:240px;height:3px;background:#fbfbff;"></div>
<div class="a" style="left:913px;top:315px;width:240px;height:1px;background:#fbfbff;"></div>
<div class="hl gl" style="left:913px;top:322px;width:240px;background:#8c8c92;"></div>
<div class="btn" style="left:913px;top:326px;width:90px;height:23px;line-height:20px;letter-spacing:0.4px;">Filter</div>
<div class="cb" style="left:1010px;top:331px;"></div>
<div class="t" style="left:1029px;top:331px;letter-spacing:-0.3px;">BG</div>
<div class="btn" style="left:913px;top:359px;width:90px;height:23px;line-height:20px;">Suche</div>
<div class="a" style="left:1010px;top:364px;width:13px;height:13px;border:1px solid #d4d4dc;background:#fafafd;"></div>
<div class="a" style="left:913px;top:385px;width:240px;height:1px;background:#fbfbff;"></div>
<div class="a" style="left:913px;top:391px;width:240px;height:21px;background:#fbfbff;border-left:1px solid #707074;border-top:1px solid #66666a;box-shadow:inset 1px 1px 0 #b4b4bc;"></div>
<div class="a" style="left:913px;top:412px;width:240px;height:158px;background:#fbfbff;"></div>
<div class="a" style="left:915px;top:393px;width:238px;height:19px;background:linear-gradient(#f3f3fd 0%,#f3f3fd 78%,#e4e4ee 90%,#d4d4e0 100%);"></div>
<div class="t" style="left:913px;top:397px;">Bezeichnung</div>
<div class="a" style="left:1138px;top:412px;width:15px;height:18px;background:#e8e8f0;"></div>
<div class="a" style="left:1138px;top:430px;width:15px;height:18px;background:#c9d8f5;"></div>
<div class="a" style="left:1138px;top:448px;width:15px;height:18px;background:#e8e8f0;"></div>
<div class="a" style="left:1138px;top:466px;width:15px;height:18px;background:#c9d8f5;"></div>
<div class="a" style="left:1138px;top:484px;width:15px;height:18px;background:#e8e8f0;"></div>
<div class="a" style="left:1138px;top:502px;width:15px;height:18px;background:#c9d8f5;"></div>
<div class="a" style="left:1138px;top:520px;width:15px;height:18px;background:#e8e8f0;"></div>
<div class="a" style="left:1138px;top:538px;width:15px;height:18px;background:#c9d8f5;"></div>
<div class="a" style="left:911px;top:411px;width:229px;height:150px;overflow:hidden;"><div class="a" style="left:0;top:0;width:229px;height:150px;filter:blur(0.9px);"><div class="a" style="left:-6px;top:-6px;width:246px;height:25px;background:#e8e8f0;"></div><div class="a" style="left:-6px;top:19px;width:246px;height:18px;background:#cfdcf5;"></div><div class="a" style="left:-6px;top:37px;width:246px;height:18px;background:#e8e8f0;"></div><div class="a" style="left:-6px;top:55px;width:246px;height:18px;background:#cfdcf5;"></div><div class="a" style="left:-6px;top:73px;width:246px;height:18px;background:#e8e8f0;"></div><div class="a" style="left:-6px;top:91px;width:246px;height:18px;background:#cfdcf5;"></div><div class="a" style="left:-6px;top:109px;width:246px;height:18px;background:#e8e8f0;"></div><div class="a" style="left:-6px;top:127px;width:246px;height:18px;background:#cfdcf5;"></div><div class="a" style="left:5.0px;top:4.0px;width:3.6px;height:3.6px;background:#9c9cb0;"></div><div class="a" style="left:5.0px;top:7.3px;width:3.6px;height:3.6px;background:#9c9cb0;"></div><div class="a" style="left:5.0px;top:10.6px;width:3.6px;height:3.6px;background:#d8d8e4;"></div><div class="a" style="left:8.3px;top:4.0px;width:3.6px;height:3.6px;background:#d8d8e4;"></div><div class="a" style="left:8.3px;top:10.6px;width:3.6px;height:3.6px;background:#a8a8b8;"></div><div class="a" style="left:11.7px;top:4.0px;width:3.6px;height:3.6px;background:#c0c0cc;"></div><div class="a" style="left:11.7px;top:7.3px;width:3.6px;height:3.6px;background:#a8a8b8;"></div><div class="a" style="left:11.7px;top:10.6px;width:3.6px;height:3.6px;background:#8c8ca4;"></div><div class="a" style="left:15.0px;top:4.0px;width:3.6px;height:3.6px;background:#b8b8c8;"></div><div class="a" style="left:15.0px;top:7.3px;width:3.6px;height:3.6px;background:#b8b8c8;"></div><div class="a" style="left:18.3px;top:7.3px;width:3.6px;height:3.6px;background:#b0b0c4;"></div><div class="a" style="left:18.3px;top:10.6px;width:3.6px;height:3.6px;background:#c0c0cc;"></div><div class="a" style="left:21.7px;top:4.0px;width:3.6px;height:3.6px;background:#c8ccdc;"></div><div class="a" style="left:21.7px;top:7.3px;width:3.6px;height:3.6px;background:#70708c;"></div><div class="a" style="left:21.7px;top:10.6px;width:3.6px;height:3.6px;background:#c8ccdc;"></div><div class="a" style="left:25.0px;top:4.0px;width:3.6px;height:3.6px;background:#b8b8c8;"></div><div class="a" style="left:25.0px;top:7.3px;width:3.6px;height:3.6px;background:#70708c;"></div><div class="a" style="left:25.0px;top:10.6px;width:3.6px;height:3.6px;background:#a8a8b8;"></div><div class="a" style="left:28.3px;top:4.0px;width:3.6px;height:3.6px;background:#c8ccdc;"></div><div class="a" style="left:28.3px;top:7.3px;width:3.6px;height:3.6px;background:#b8b8c8;"></div><div class="a" style="left:31.7px;top:4.0px;width:3.6px;height:3.6px;background:#b0b0c4;"></div><div class="a" style="left:31.7px;top:7.3px;width:3.6px;height:3.6px;background:#c0c0cc;"></div><div class="a" style="left:31.7px;top:10.6px;width:3.6px;height:3.6px;background:#b8b8c8;"></div><div class="a" style="left:35.0px;top:4.0px;width:3.6px;height:3.6px;background:#d8d8e4;"></div><div class="a" style="left:35.0px;top:7.3px;width:3.6px;height:3.6px;background:#b0b0c4;"></div><div class="a" style="left:35.0px;top:10.6px;width:3.6px;height:3.6px;background:#a8a8b8;"></div><div class="a" style="left:38.3px;top:4.0px;width:3.6px;height:3.6px;background:#c0c0cc;"></div><div class="a" style="left:38.3px;top:7.3px;width:3.6px;height:3.6px;background:#b0b0c4;"></div><div class="a" style="left:41.7px;top:7.3px;width:3.6px;height:3.6px;background:#b0b0c4;"></div><div class="a" style="left:41.7px;top:10.6px;width:3.6px;height:3.6px;background:#c0c0cc;"></div><div class="a" style="left:8.4px;top:40.0px;width:3.7px;height:3.6px;background:#9c9cb0;"></div><div class="a" style="left:8.4px;top:43.3px;width:3.7px;height:3.6px;background:#8c8ca4;"></div><div class="a" style="left:8.4px;top:46.6px;width:3.7px;height:3.6px;background:#b0b0c4;"></div><div class="a" style="left:11.8px;top:40.0px;width:3.7px;height:3.6px;background:#b0b0c4;"></div><div class="a" style="left:11.8px;top:43.3px;width:3.7px;height:3.6px;background:#c4c4d0;"></div><div class="a" style="left:11.8px;top:46.6px;width:3.7px;height:3.6px;background:#b8b8c8;"></div><div class="a" style="left:15.1px;top:40.0px;width:3.7px;height:3.6px;background:#b0b0c4;"></div><div class="a" style="left:15.1px;top:43.3px;width:3.7px;height:3.6px;background:#c0c0cc;"></div><div class="a" style="left:15.1px;top:46.6px;width:3.7px;height:3.6px;background:#d8d8e4;"></div><div class="a" style="left:18.5px;top:43.3px;width:3.7px;height:3.6px;background:#8c8ca4;"></div><div class="a" style="left:18.5px;top:46.6px;width:3.7px;height:3.6px;background:#b0b0c4;"></div><div class="a" style="left:21.9px;top:40.0px;width:3.7px;height:3.6px;background:#d8d8e4;"></div><div class="a" style="left:21.9px;top:43.3px;width:3.7px;height:3.6px;background:#9c9cb0;"></div><div class="a" style="left:21.9px;top:46.6px;width:3.7px;height:3.6px;background:#a8a8b8;"></div><div class="a" style="left:25.2px;top:43.3px;width:3.7px;height:3.6px;background:#a8a8b8;"></div><div class="a" style="left:28.6px;top:40.0px;width:3.7px;height:3.6px;background:#c4c4d0;"></div><div class="a" style="left:28.6px;top:46.6px;width:3.7px;height:3.6px;background:#d8d8e4;"></div><div class="a" style="left:32.0px;top:40.0px;width:3.7px;height:3.6px;background:#c8ccdc;"></div><div class="a" style="left:32.0px;top:46.6px;width:3.7px;height:3.6px;background:#c8ccdc;"></div><div class="a" style="left:35.4px;top:40.0px;width:3.7px;height:3.6px;background:#b8b8c8;"></div><div class="a" style="left:35.4px;top:43.3px;width:3.7px;height:3.6px;background:#b0b0c4;"></div><div class="a" style="left:35.4px;top:46.6px;width:3.7px;height:3.6px;background:#b0b0c4;"></div><div class="a" style="left:38.8px;top:40.0px;width:3.7px;height:3.6px;background:#d8d8e4;"></div><div class="a" style="left:38.8px;top:43.3px;width:3.7px;height:3.6px;background:#70708c;"></div><div class="a" style="left:38.8px;top:46.6px;width:3.7px;height:3.6px;background:#8c8ca4;"></div><div class="a" style="left:42.1px;top:40.0px;width:3.7px;height:3.6px;background:#c4c4d0;"></div><div class="a" style="left:42.1px;top:43.3px;width:3.7px;height:3.6px;background:#b0b0c4;"></div><div class="a" style="left:42.1px;top:46.6px;width:3.7px;height:3.6px;background:#8c8ca4;"></div><div class="a" style="left:45.5px;top:40.0px;width:3.7px;height:3.6px;background:#c4c4d0;"></div><div class="a" style="left:45.5px;top:43.3px;width:3.7px;height:3.6px;background:#c4c4d0;"></div><div class="a" style="left:45.5px;top:46.6px;width:3.7px;height:3.6px;background:#a8a8b8;"></div><div class="a" style="left:48.9px;top:40.0px;width:3.7px;height:3.6px;background:#9c9cb0;"></div><div class="a" style="left:48.9px;top:43.3px;width:3.7px;height:3.6px;background:#666a8c;"></div><div class="a" style="left:52.2px;top:40.0px;width:3.7px;height:3.6px;background:#a8a8b8;"></div><div class="a" style="left:52.2px;top:43.3px;width:3.7px;height:3.6px;background:#9c9cb0;"></div><div class="a" style="left:52.2px;top:46.6px;width:3.7px;height:3.6px;background:#d8d8e4;"></div><div class="a" style="left:55.6px;top:40.0px;width:3.7px;height:3.6px;background:#d8d8e4;"></div><div class="a" style="left:55.6px;top:43.3px;width:3.7px;height:3.6px;background:#c4c4d0;"></div><div class="a" style="left:5.0px;top:58.0px;width:3.6px;height:3.6px;background:#7c88b4;"></div><div class="a" style="left:5.0px;top:61.3px;width:3.6px;height:3.6px;background:#70708c;"></div><div class="a" style="left:5.0px;top:64.6px;width:3.6px;height:3.6px;background:#b0bcdc;"></div><div class="a" style="left:8.3px;top:58.0px;width:3.6px;height:3.6px;background:#b8c4e0;"></div><div class="a" style="left:8.3px;top:61.3px;width:3.6px;height:3.6px;background:#7c88b4;"></div><div class="a" style="left:8.3px;top:64.6px;width:3.6px;height:3.6px;background:#8c98c0;"></div><div class="a" style="left:11.7px;top:58.0px;width:3.6px;height:3.6px;background:#7c88b4;"></div><div class="a" style="left:11.7px;top:61.3px;width:3.6px;height:3.6px;background:#8490bc;"></div><div class="a" style="left:11.7px;top:64.6px;width:3.6px;height:3.6px;background:#8c98c0;"></div><div class="a" style="left:15.0px;top:58.0px;width:3.6px;height:3.6px;background:#8c98c0;"></div><div class="a" style="left:15.0px;top:61.3px;width:3.6px;height:3.6px;background:#7c88b4;"></div><div class="a" style="left:15.0px;top:64.6px;width:3.6px;height:3.6px;background:#7c88b4;"></div><div class="a" style="left:18.3px;top:58.0px;width:3.6px;height:3.6px;background:#c8ccdc;"></div><div class="a" style="left:18.3px;top:61.3px;width:3.6px;height:3.6px;background:#b0bcdc;"></div><div class="a" style="left:18.3px;top:64.6px;width:3.6px;height:3.6px;background:#b8c4e0;"></div><div class="a" style="left:21.7px;top:58.0px;width:3.6px;height:3.6px;background:#8490bc;"></div><div class="a" style="left:21.7px;top:61.3px;width:3.6px;height:3.6px;background:#94a0c8;"></div><div class="a" style="left:21.7px;top:64.6px;width:3.6px;height:3.6px;background:#94a0c8;"></div><div class="a" style="left:25.0px;top:58.0px;width:3.6px;height:3.6px;background:#7c88b4;"></div><div class="a" style="left:25.0px;top:61.3px;width:3.6px;height:3.6px;background:#a4b0d4;"></div><div class="a" style="left:25.0px;top:64.6px;width:3.6px;height:3.6px;background:#8c98c0;"></div><div class="a" style="left:28.3px;top:58.0px;width:3.6px;height:3.6px;background:#94a0c8;"></div><div class="a" style="left:28.3px;top:61.3px;width:3.6px;height:3.6px;background:#8490bc;"></div><div class="a" style="left:28.3px;top:64.6px;width:3.6px;height:3.6px;background:#7c88b4;"></div><div class="a" style="left:31.7px;top:58.0px;width:3.6px;height:3.6px;background:#b8c4e0;"></div><div class="a" style="left:31.7px;top:61.3px;width:3.6px;height:3.6px;background:#8c98c0;"></div><div class="a" style="left:31.7px;top:64.6px;width:3.6px;height:3.6px;background:#c8ccdc;"></div><div class="a" style="left:35.0px;top:58.0px;width:3.6px;height:3.6px;background:#8490bc;"></div><div class="a" style="left:35.0px;top:64.6px;width:3.6px;height:3.6px;background:#d8d8e4;"></div><div class="a" style="left:38.3px;top:58.0px;width:3.6px;height:3.6px;background:#8490bc;"></div><div class="a" style="left:38.3px;top:61.3px;width:3.6px;height:3.6px;background:#b0bcdc;"></div><div class="a" style="left:38.3px;top:64.6px;width:3.6px;height:3.6px;background:#a4b0d4;"></div><div class="a" style="left:41.7px;top:61.3px;width:3.6px;height:3.6px;background:#70708c;"></div><div class="a" style="left:45.0px;top:58.0px;width:3.6px;height:3.6px;background:#8490bc;"></div><div class="a" style="left:45.0px;top:61.3px;width:3.6px;height:3.6px;background:#a4b0d4;"></div><div class="a" style="left:45.0px;top:64.6px;width:3.6px;height:3.6px;background:#a4b0d4;"></div><div class="a" style="left:48.3px;top:58.0px;width:3.6px;height:3.6px;background:#b0bcdc;"></div><div class="a" style="left:48.3px;top:61.3px;width:3.6px;height:3.6px;background:#8490bc;"></div><div class="a" style="left:51.7px;top:61.3px;width:3.6px;height:3.6px;background:#94a0c8;"></div><div class="a" style="left:5.0px;top:82.6px;width:3.9px;height:3.6px;background:#b0b0c4;"></div><div class="a" style="left:8.6px;top:76.0px;width:3.9px;height:3.6px;background:#a8a8b8;"></div><div class="a" style="left:8.6px;top:79.3px;width:3.9px;height:3.6px;background:#b8b8c8;"></div><div class="a" style="left:8.6px;top:82.6px;width:3.9px;height:3.6px;background:#b8b8c8;"></div><div class="a" style="left:12.1px;top:76.0px;width:3.9px;height:3.6px;background:#c4c4d0;"></div><div class="a" style="left:12.1px;top:79.3px;width:3.9px;height:3.6px;background:#b8b8c8;"></div><div class="a" style="left:12.1px;top:82.6px;width:3.9px;height:3.6px;background:#c8ccdc;"></div><div class="a" style="left:15.7px;top:76.0px;width:3.9px;height:3.6px;background:#b8b8c8;"></div><div class="a" style="left:15.7px;top:79.3px;width:3.9px;height:3.6px;background:#b0b0c4;"></div><div class="a" style="left:15.7px;top:82.6px;width:3.9px;height:3.6px;background:#c0c0cc;"></div><div class="a" style="left:19.3px;top:76.0px;width:3.9px;height:3.6px;background:#c8ccdc;"></div><div class="a" style="left:19.3px;top:79.3px;width:3.9px;height:3.6px;background:#c0c0cc;"></div><div class="a" style="left:19.3px;top:82.6px;width:3.9px;height:3.6px;background:#c8ccdc;"></div><div class="a" style="left:22.9px;top:76.0px;width:3.9px;height:3.6px;background:#c0c0cc;"></div><div class="a" style="left:22.9px;top:79.3px;width:3.9px;height:3.6px;background:#666a8c;"></div><div class="a" style="left:22.9px;top:82.6px;width:3.9px;height:3.6px;background:#8c8ca4;"></div><div class="a" style="left:26.4px;top:76.0px;width:3.9px;height:3.6px;background:#d8d8e4;"></div><div class="a" style="left:26.4px;top:79.3px;width:3.9px;height:3.6px;background:#b8b8c8;"></div><div class="a" style="left:26.4px;top:82.6px;width:3.9px;height:3.6px;background:#b0b0c4;"></div><div class="a" style="left:5.0px;top:97.3px;width:3.5px;height:3.6px;background:#8c98c0;"></div><div class="a" style="left:5.0px;top:100.6px;width:3.5px;height:3.6px;background:#94a0c8;"></div><div class="a" style="left:8.2px;top:94.0px;width:3.5px;height:3.6px;background:#8c98c0;"></div><div class="a" style="left:8.2px;top:97.3px;width:3.5px;height:3.6px;background:#b8c4e0;"></div><div class="a" style="left:8.2px;top:100.6px;width:3.5px;height:3.6px;background:#8490bc;"></div><div class="a" style="left:11.4px;top:94.0px;width:3.5px;height:3.6px;background:#94a0c8;"></div><div class="a" style="left:11.4px;top:97.3px;width:3.5px;height:3.6px;background:#8490bc;"></div><div class="a" style="left:11.4px;top:100.6px;width:3.5px;height:3.6px;background:#8490bc;"></div><div class="a" style="left:14.6px;top:94.0px;width:3.5px;height:3.6px;background:#8490bc;"></div><div class="a" style="left:14.6px;top:100.6px;width:3.5px;height:3.6px;background:#c8ccdc;"></div><div class="a" style="left:17.8px;top:94.0px;width:3.5px;height:3.6px;background:#a4b0d4;"></div><div class="a" style="left:17.8px;top:97.3px;width:3.5px;height:3.6px;background:#b8c4e0;"></div><div class="a" style="left:17.8px;top:100.6px;width:3.5px;height:3.6px;background:#b8c4e0;"></div><div class="a" style="left:21.0px;top:97.3px;width:3.5px;height:3.6px;background:#b8c4e0;"></div><div class="a" style="left:24.2px;top:94.0px;width:3.5px;height:3.6px;background:#a4b0d4;"></div><div class="a" style="left:24.2px;top:97.3px;width:3.5px;height:3.6px;background:#94a0c8;"></div><div class="a" style="left:24.2px;top:100.6px;width:3.5px;height:3.6px;background:#d8d8e4;"></div><div class="a" style="left:27.4px;top:94.0px;width:3.5px;height:3.6px;background:#94a0c8;"></div><div class="a" style="left:27.4px;top:97.3px;width:3.5px;height:3.6px;background:#8c98c0;"></div><div class="a" style="left:27.4px;top:100.6px;width:3.5px;height:3.6px;background:#d8d8e4;"></div><div class="a" style="left:30.6px;top:94.0px;width:3.5px;height:3.6px;background:#94a0c8;"></div><div class="a" style="left:30.6px;top:97.3px;width:3.5px;height:3.6px;background:#7c88b4;"></div><div class="a" style="left:30.6px;top:100.6px;width:3.5px;height:3.6px;background:#94a0c8;"></div><div class="a" style="left:33.8px;top:97.3px;width:3.5px;height:3.6px;background:#8c98c0;"></div><div class="a" style="left:33.8px;top:100.6px;width:3.5px;height:3.6px;background:#8490bc;"></div><div class="a" style="left:37.0px;top:97.3px;width:3.5px;height:3.6px;background:#b8c4e0;"></div><div class="a" style="left:37.0px;top:100.6px;width:3.5px;height:3.6px;background:#7c88b4;"></div><div class="a" style="left:40.2px;top:97.3px;width:3.5px;height:3.6px;background:#70708c;"></div><div class="a" style="left:40.2px;top:100.6px;width:3.5px;height:3.6px;background:#b8c4e0;"></div><div class="a" style="left:43.4px;top:94.0px;width:3.5px;height:3.6px;background:#7c88b4;"></div><div class="a" style="left:43.4px;top:97.3px;width:3.5px;height:3.6px;background:#b8c4e0;"></div><div class="a" style="left:43.4px;top:100.6px;width:3.5px;height:3.6px;background:#b0bcdc;"></div><div class="a" style="left:46.6px;top:94.0px;width:3.5px;height:3.6px;background:#94a0c8;"></div><div class="a" style="left:46.6px;top:100.6px;width:3.5px;height:3.6px;background:#94a0c8;"></div><div class="a" style="left:49.8px;top:94.0px;width:3.5px;height:3.6px;background:#8c98c0;"></div><div class="a" style="left:49.8px;top:97.3px;width:3.5px;height:3.6px;background:#666a8c;"></div><div class="a" style="left:49.8px;top:100.6px;width:3.5px;height:3.6px;background:#8490bc;"></div><div class="a" style="left:53.0px;top:94.0px;width:3.5px;height:3.6px;background:#94a0c8;"></div><div class="a" style="left:53.0px;top:97.3px;width:3.5px;height:3.6px;background:#b8c4e0;"></div><div class="a" style="left:56.2px;top:94.0px;width:3.5px;height:3.6px;background:#d8d8e4;"></div><div class="a" style="left:56.2px;top:97.3px;width:3.5px;height:3.6px;background:#b8c4e0;"></div><div class="a" style="left:56.2px;top:100.6px;width:3.5px;height:3.6px;background:#7c88b4;"></div><div class="a" style="left:59.4px;top:94.0px;width:3.5px;height:3.6px;background:#94a0c8;"></div><div class="a" style="left:59.4px;top:100.6px;width:3.5px;height:3.6px;background:#7c88b4;"></div><div class="a" style="left:62.6px;top:94.0px;width:3.5px;height:3.6px;background:#8c98c0;"></div><div class="a" style="left:62.6px;top:97.3px;width:3.5px;height:3.6px;background:#666a8c;"></div><div class="a" style="left:62.6px;top:100.6px;width:3.5px;height:3.6px;background:#b0bcdc;"></div><div class="a" style="left:65.8px;top:94.0px;width:3.5px;height:3.6px;background:#7c88b4;"></div><div class="a" style="left:65.8px;top:100.6px;width:3.5px;height:3.6px;background:#8490bc;"></div><div class="a" style="left:69.0px;top:94.0px;width:3.5px;height:3.6px;background:#8490bc;"></div><div class="a" style="left:69.0px;top:100.6px;width:3.5px;height:3.6px;background:#c8ccdc;"></div><div class="a" style="left:72.2px;top:94.0px;width:3.5px;height:3.6px;background:#b8c4e0;"></div><div class="a" style="left:72.2px;top:97.3px;width:3.5px;height:3.6px;background:#b8c4e0;"></div><div class="a" style="left:72.2px;top:100.6px;width:3.5px;height:3.6px;background:#b0bcdc;"></div><div class="a" style="left:75.4px;top:94.0px;width:3.5px;height:3.6px;background:#c8ccdc;"></div><div class="a" style="left:75.4px;top:97.3px;width:3.5px;height:3.6px;background:#7c88b4;"></div><div class="a" style="left:75.4px;top:100.6px;width:3.5px;height:3.6px;background:#7c88b4;"></div><div class="a" style="left:78.6px;top:94.0px;width:3.5px;height:3.6px;background:#b0bcdc;"></div><div class="a" style="left:78.6px;top:97.3px;width:3.5px;height:3.6px;background:#666a8c;"></div><div class="a" style="left:81.8px;top:97.3px;width:3.5px;height:3.6px;background:#b8c4e0;"></div><div class="a" style="left:81.8px;top:100.6px;width:3.5px;height:3.6px;background:#7c88b4;"></div><div class="a" style="left:85.0px;top:94.0px;width:3.5px;height:3.6px;background:#d8d8e4;"></div><div class="a" style="left:85.0px;top:97.3px;width:3.5px;height:3.6px;background:#8490bc;"></div><div class="a" style="left:88.2px;top:97.3px;width:3.5px;height:3.6px;background:#70708c;"></div><div class="a" style="left:88.2px;top:100.6px;width:3.5px;height:3.6px;background:#94a0c8;"></div><div class="a" style="left:91.4px;top:94.0px;width:3.5px;height:3.6px;background:#b0bcdc;"></div><div class="a" style="left:91.4px;top:97.3px;width:3.5px;height:3.6px;background:#8490bc;"></div><div class="a" style="left:91.4px;top:100.6px;width:3.5px;height:3.6px;background:#8c98c0;"></div><div class="a" style="left:94.6px;top:94.0px;width:3.5px;height:3.6px;background:#7c88b4;"></div><div class="a" style="left:94.6px;top:97.3px;width:3.5px;height:3.6px;background:#8c98c0;"></div><div class="a" style="left:97.8px;top:94.0px;width:3.5px;height:3.6px;background:#c8ccdc;"></div><div class="a" style="left:97.8px;top:97.3px;width:3.5px;height:3.6px;background:#8490bc;"></div><div class="a" style="left:97.8px;top:100.6px;width:3.5px;height:3.6px;background:#d8d8e4;"></div><div class="a" style="left:101.0px;top:94.0px;width:3.5px;height:3.6px;background:#8490bc;"></div><div class="a" style="left:101.0px;top:100.6px;width:3.5px;height:3.6px;background:#8c98c0;"></div><div class="a" style="left:104.2px;top:94.0px;width:3.5px;height:3.6px;background:#b8c4e0;"></div><div class="a" style="left:104.2px;top:97.3px;width:3.5px;height:3.6px;background:#a4b0d4;"></div><div class="a" style="left:104.2px;top:100.6px;width:3.5px;height:3.6px;background:#94a0c8;"></div><div class="a" style="left:107.4px;top:94.0px;width:3.5px;height:3.6px;background:#8c98c0;"></div><div class="a" style="left:107.4px;top:97.3px;width:3.5px;height:3.6px;background:#666a8c;"></div><div class="a" style="left:107.4px;top:100.6px;width:3.5px;height:3.6px;background:#7c88b4;"></div><div class="a" style="left:110.6px;top:94.0px;width:3.5px;height:3.6px;background:#d8d8e4;"></div><div class="a" style="left:110.6px;top:97.3px;width:3.5px;height:3.6px;background:#b0bcdc;"></div><div class="a" style="left:113.8px;top:94.0px;width:3.5px;height:3.6px;background:#7c88b4;"></div><div class="a" style="left:113.8px;top:97.3px;width:3.5px;height:3.6px;background:#8490bc;"></div><div class="a" style="left:113.8px;top:100.6px;width:3.5px;height:3.6px;background:#b8c4e0;"></div><div class="a" style="left:117.0px;top:97.3px;width:3.5px;height:3.6px;background:#8490bc;"></div><div class="a" style="left:117.0px;top:100.6px;width:3.5px;height:3.6px;background:#b8c4e0;"></div><div class="a" style="left:120.2px;top:94.0px;width:3.5px;height:3.6px;background:#b0bcdc;"></div><div class="a" style="left:120.2px;top:100.6px;width:3.5px;height:3.6px;background:#8490bc;"></div><div class="a" style="left:123.4px;top:94.0px;width:3.5px;height:3.6px;background:#b0bcdc;"></div><div class="a" style="left:123.4px;top:97.3px;width:3.5px;height:3.6px;background:#b0bcdc;"></div><div class="a" style="left:123.4px;top:100.6px;width:3.5px;height:3.6px;background:#b8c4e0;"></div><div class="a" style="left:126.6px;top:94.0px;width:3.5px;height:3.6px;background:#b8c4e0;"></div><div class="a" style="left:126.6px;top:100.6px;width:3.5px;height:3.6px;background:#d8d8e4;"></div><div class="a" style="left:129.8px;top:97.3px;width:3.5px;height:3.6px;background:#7c88b4;"></div><div class="a" style="left:129.8px;top:100.6px;width:3.5px;height:3.6px;background:#b8c4e0;"></div><div class="a" style="left:133.0px;top:97.3px;width:3.5px;height:3.6px;background:#b0bcdc;"></div><div class="a" style="left:133.0px;top:100.6px;width:3.5px;height:3.6px;background:#7c88b4;"></div><div class="a" style="left:136.2px;top:94.0px;width:3.5px;height:3.6px;background:#b0bcdc;"></div><div class="a" style="left:139.4px;top:94.0px;width:3.5px;height:3.6px;background:#c8ccdc;"></div><div class="a" style="left:139.4px;top:97.3px;width:3.5px;height:3.6px;background:#7c88b4;"></div><div class="a" style="left:139.4px;top:100.6px;width:3.5px;height:3.6px;background:#8c98c0;"></div><div class="a" style="left:142.6px;top:94.0px;width:3.5px;height:3.6px;background:#8c98c0;"></div><div class="a" style="left:142.6px;top:100.6px;width:3.5px;height:3.6px;background:#a4b0d4;"></div><div class="a" style="left:145.8px;top:94.0px;width:3.5px;height:3.6px;background:#8490bc;"></div><div class="a" style="left:145.8px;top:97.3px;width:3.5px;height:3.6px;background:#7c88b4;"></div><div class="a" style="left:149.0px;top:94.0px;width:3.5px;height:3.6px;background:#b0bcdc;"></div><div class="a" style="left:149.0px;top:97.3px;width:3.5px;height:3.6px;background:#666a8c;"></div><div class="a" style="left:152.2px;top:97.3px;width:3.5px;height:3.6px;background:#8c98c0;"></div><div class="a" style="left:152.2px;top:100.6px;width:3.5px;height:3.6px;background:#b0bcdc;"></div><div class="a" style="left:155.4px;top:94.0px;width:3.5px;height:3.6px;background:#8c98c0;"></div><div class="a" style="left:155.4px;top:97.3px;width:3.5px;height:3.6px;background:#b8c4e0;"></div><div class="a" style="left:155.4px;top:100.6px;width:3.5px;height:3.6px;background:#b8c4e0;"></div><div class="a" style="left:158.6px;top:94.0px;width:3.5px;height:3.6px;background:#b8c4e0;"></div><div class="a" style="left:158.6px;top:97.3px;width:3.5px;height:3.6px;background:#94a0c8;"></div><div class="a" style="left:161.8px;top:94.0px;width:3.5px;height:3.6px;background:#c8ccdc;"></div><div class="a" style="left:161.8px;top:100.6px;width:3.5px;height:3.6px;background:#7c88b4;"></div><div class="a" style="left:165.0px;top:97.3px;width:3.5px;height:3.6px;background:#8490bc;"></div><div class="a" style="left:168.2px;top:94.0px;width:3.5px;height:3.6px;background:#b0bcdc;"></div><div class="a" style="left:168.2px;top:97.3px;width:3.5px;height:3.6px;background:#8c98c0;"></div><div class="a" style="left:168.2px;top:100.6px;width:3.5px;height:3.6px;background:#a4b0d4;"></div><div class="a" style="left:171.4px;top:94.0px;width:3.5px;height:3.6px;background:#c8ccdc;"></div><div class="a" style="left:171.4px;top:97.3px;width:3.5px;height:3.6px;background:#94a0c8;"></div><div class="a" style="left:171.4px;top:100.6px;width:3.5px;height:3.6px;background:#d8d8e4;"></div><div class="a" style="left:174.6px;top:94.0px;width:3.5px;height:3.6px;background:#94a0c8;"></div><div class="a" style="left:174.6px;top:97.3px;width:3.5px;height:3.6px;background:#666a8c;"></div><div class="a" style="left:174.6px;top:100.6px;width:3.5px;height:3.6px;background:#a4b0d4;"></div><div class="a" style="left:177.8px;top:94.0px;width:3.5px;height:3.6px;background:#a4b0d4;"></div><div class="a" style="left:177.8px;top:97.3px;width:3.5px;height:3.6px;background:#94a0c8;"></div><div class="a" style="left:177.8px;top:100.6px;width:3.5px;height:3.6px;background:#7c88b4;"></div><div class="a" style="left:181.0px;top:94.0px;width:3.5px;height:3.6px;background:#b8c4e0;"></div><div class="a" style="left:181.0px;top:97.3px;width:3.5px;height:3.6px;background:#a4b0d4;"></div><div class="a" style="left:181.0px;top:100.6px;width:3.5px;height:3.6px;background:#a4b0d4;"></div><div class="a" style="left:184.2px;top:94.0px;width:3.5px;height:3.6px;background:#a4b0d4;"></div><div class="a" style="left:184.2px;top:97.3px;width:3.5px;height:3.6px;background:#b0bcdc;"></div><div class="a" style="left:184.2px;top:100.6px;width:3.5px;height:3.6px;background:#d8d8e4;"></div><div class="a" style="left:187.4px;top:94.0px;width:3.5px;height:3.6px;background:#b8c4e0;"></div><div class="a" style="left:190.6px;top:94.0px;width:3.5px;height:3.6px;background:#8490bc;"></div><div class="a" style="left:190.6px;top:97.3px;width:3.5px;height:3.6px;background:#666a8c;"></div><div class="a" style="left:190.6px;top:100.6px;width:3.5px;height:3.6px;background:#94a0c8;"></div><div class="a" style="left:193.8px;top:94.0px;width:3.5px;height:3.6px;background:#c8ccdc;"></div><div class="a" style="left:193.8px;top:97.3px;width:3.5px;height:3.6px;background:#94a0c8;"></div><div class="a" style="left:197.0px;top:94.0px;width:3.5px;height:3.6px;background:#a4b0d4;"></div><div class="a" style="left:200.2px;top:94.0px;width:3.5px;height:3.6px;background:#d8d8e4;"></div><div class="a" style="left:200.2px;top:97.3px;width:3.5px;height:3.6px;background:#94a0c8;"></div><div class="a" style="left:200.2px;top:100.6px;width:3.5px;height:3.6px;background:#8490bc;"></div><div class="a" style="left:203.4px;top:94.0px;width:3.5px;height:3.6px;background:#d8d8e4;"></div><div class="a" style="left:203.4px;top:100.6px;width:3.5px;height:3.6px;background:#c8ccdc;"></div><div class="a" style="left:206.6px;top:94.0px;width:3.5px;height:3.6px;background:#8490bc;"></div><div class="a" style="left:206.6px;top:97.3px;width:3.5px;height:3.6px;background:#a4b0d4;"></div><div class="a" style="left:206.6px;top:100.6px;width:3.5px;height:3.6px;background:#a4b0d4;"></div><div class="a" style="left:209.8px;top:94.0px;width:3.5px;height:3.6px;background:#7c88b4;"></div><div class="a" style="left:209.8px;top:97.3px;width:3.5px;height:3.6px;background:#8c98c0;"></div><div class="a" style="left:209.8px;top:100.6px;width:3.5px;height:3.6px;background:#d8d8e4;"></div><div class="a" style="left:5.0px;top:112.0px;width:3.6px;height:3.6px;background:#a8a8b8;"></div><div class="a" style="left:5.0px;top:115.3px;width:3.6px;height:3.6px;background:#8c8ca4;"></div><div class="a" style="left:5.0px;top:118.6px;width:3.6px;height:3.6px;background:#b0b0c4;"></div><div class="a" style="left:8.3px;top:112.0px;width:3.6px;height:3.6px;background:#c4c4d0;"></div><div class="a" style="left:8.3px;top:115.3px;width:3.6px;height:3.6px;background:#666a8c;"></div><div class="a" style="left:8.3px;top:118.6px;width:3.6px;height:3.6px;background:#c8ccdc;"></div><div class="a" style="left:11.7px;top:112.0px;width:3.6px;height:3.6px;background:#b0b0c4;"></div><div class="a" style="left:11.7px;top:115.3px;width:3.6px;height:3.6px;background:#c0c0cc;"></div><div class="a" style="left:11.7px;top:118.6px;width:3.6px;height:3.6px;background:#a8a8b8;"></div><div class="a" style="left:15.0px;top:112.0px;width:3.6px;height:3.6px;background:#c4c4d0;"></div><div class="a" style="left:18.3px;top:112.0px;width:3.6px;height:3.6px;background:#c0c0cc;"></div><div class="a" style="left:18.3px;top:115.3px;width:3.6px;height:3.6px;background:#c4c4d0;"></div><div class="a" style="left:21.7px;top:112.0px;width:3.6px;height:3.6px;background:#a8a8b8;"></div><div class="a" style="left:21.7px;top:115.3px;width:3.6px;height:3.6px;background:#c4c4d0;"></div><div class="a" style="left:21.7px;top:118.6px;width:3.6px;height:3.6px;background:#8c8ca4;"></div><div class="a" style="left:25.0px;top:112.0px;width:3.6px;height:3.6px;background:#c4c4d0;"></div><div class="a" style="left:25.0px;top:115.3px;width:3.6px;height:3.6px;background:#b8b8c8;"></div><div class="a" style="left:28.3px;top:112.0px;width:3.6px;height:3.6px;background:#d8d8e4;"></div><div class="a" style="left:28.3px;top:115.3px;width:3.6px;height:3.6px;background:#b8b8c8;"></div><div class="a" style="left:31.7px;top:112.0px;width:3.6px;height:3.6px;background:#c4c4d0;"></div><div class="a" style="left:31.7px;top:115.3px;width:3.6px;height:3.6px;background:#c4c4d0;"></div><div class="a" style="left:31.7px;top:118.6px;width:3.6px;height:3.6px;background:#8c8ca4;"></div><div class="a" style="left:35.0px;top:112.0px;width:3.6px;height:3.6px;background:#9c9cb0;"></div><div class="a" style="left:35.0px;top:115.3px;width:3.6px;height:3.6px;background:#9c9cb0;"></div><div class="a" style="left:35.0px;top:118.6px;width:3.6px;height:3.6px;background:#c8ccdc;"></div><div class="a" style="left:38.3px;top:112.0px;width:3.6px;height:3.6px;background:#8c8ca4;"></div><div class="a" style="left:38.3px;top:115.3px;width:3.6px;height:3.6px;background:#8c8ca4;"></div><div class="a" style="left:38.3px;top:118.6px;width:3.6px;height:3.6px;background:#a8a8b8;"></div><div class="a" style="left:41.7px;top:112.0px;width:3.6px;height:3.6px;background:#c0c0cc;"></div><div class="a" style="left:41.7px;top:115.3px;width:3.6px;height:3.6px;background:#9c9cb0;"></div><div class="a" style="left:41.7px;top:118.6px;width:3.6px;height:3.6px;background:#c4c4d0;"></div><div class="a" style="left:45.0px;top:112.0px;width:3.6px;height:3.6px;background:#9c9cb0;"></div><div class="a" style="left:45.0px;top:118.6px;width:3.6px;height:3.6px;background:#c8ccdc;"></div><div class="a" style="left:48.3px;top:115.3px;width:3.6px;height:3.6px;background:#b8b8c8;"></div><div class="a" style="left:51.7px;top:112.0px;width:3.6px;height:3.6px;background:#a8a8b8;"></div><div class="a" style="left:51.7px;top:118.6px;width:3.6px;height:3.6px;background:#c8ccdc;"></div><div class="a" style="left:55.0px;top:112.0px;width:3.6px;height:3.6px;background:#d8d8e4;"></div><div class="a" style="left:58.3px;top:112.0px;width:3.6px;height:3.6px;background:#b8b8c8;"></div><div class="a" style="left:58.3px;top:115.3px;width:3.6px;height:3.6px;background:#b0b0c4;"></div><div class="a" style="left:58.3px;top:118.6px;width:3.6px;height:3.6px;background:#c0c0cc;"></div><div class="a" style="left:61.7px;top:112.0px;width:3.6px;height:3.6px;background:#c0c0cc;"></div><div class="a" style="left:61.7px;top:115.3px;width:3.6px;height:3.6px;background:#b8b8c8;"></div><div class="a" style="left:61.7px;top:118.6px;width:3.6px;height:3.6px;background:#a8a8b8;"></div><div class="a" style="left:5.0px;top:130.0px;width:3.6px;height:3.6px;background:#d8d8e4;"></div><div class="a" style="left:5.0px;top:133.3px;width:3.6px;height:3.6px;background:#94a0c8;"></div><div class="a" style="left:5.0px;top:136.6px;width:3.6px;height:3.6px;background:#a4b0d4;"></div><div class="a" style="left:8.3px;top:133.3px;width:3.6px;height:3.6px;background:#a4b0d4;"></div><div class="a" style="left:11.5px;top:130.0px;width:3.6px;height:3.6px;background:#7c88b4;"></div><div class="a" style="left:11.5px;top:133.3px;width:3.6px;height:3.6px;background:#a4b0d4;"></div><div class="a" style="left:11.5px;top:136.6px;width:3.6px;height:3.6px;background:#b8c4e0;"></div><div class="a" style="left:14.8px;top:130.0px;width:3.6px;height:3.6px;background:#b0bcdc;"></div><div class="a" style="left:14.8px;top:133.3px;width:3.6px;height:3.6px;background:#a4b0d4;"></div><div class="a" style="left:14.8px;top:136.6px;width:3.6px;height:3.6px;background:#8490bc;"></div><div class="a" style="left:18.0px;top:130.0px;width:3.6px;height:3.6px;background:#b0bcdc;"></div><div class="a" style="left:18.0px;top:133.3px;width:3.6px;height:3.6px;background:#a4b0d4;"></div><div class="a" style="left:21.3px;top:130.0px;width:3.6px;height:3.6px;background:#b8c4e0;"></div><div class="a" style="left:21.3px;top:133.3px;width:3.6px;height:3.6px;background:#8490bc;"></div><div class="a" style="left:21.3px;top:136.6px;width:3.6px;height:3.6px;background:#b0bcdc;"></div><div class="a" style="left:24.6px;top:130.0px;width:3.6px;height:3.6px;background:#d8d8e4;"></div><div class="a" style="left:24.6px;top:136.6px;width:3.6px;height:3.6px;background:#a4b0d4;"></div><div class="a" style="left:27.8px;top:130.0px;width:3.6px;height:3.6px;background:#b0bcdc;"></div><div class="a" style="left:27.8px;top:133.3px;width:3.6px;height:3.6px;background:#a4b0d4;"></div><div class="a" style="left:27.8px;top:136.6px;width:3.6px;height:3.6px;background:#c8ccdc;"></div><div class="a" style="left:31.1px;top:130.0px;width:3.6px;height:3.6px;background:#c8ccdc;"></div><div class="a" style="left:31.1px;top:133.3px;width:3.6px;height:3.6px;background:#94a0c8;"></div><div class="a" style="left:31.1px;top:136.6px;width:3.6px;height:3.6px;background:#c8ccdc;"></div><div class="a" style="left:34.3px;top:130.0px;width:3.6px;height:3.6px;background:#b8c4e0;"></div><div class="a" style="left:34.3px;top:136.6px;width:3.6px;height:3.6px;background:#8c98c0;"></div><div class="a" style="left:37.6px;top:130.0px;width:3.6px;height:3.6px;background:#8490bc;"></div><div class="a" style="left:37.6px;top:136.6px;width:3.6px;height:3.6px;background:#b0bcdc;"></div><div class="a" style="left:40.9px;top:130.0px;width:3.6px;height:3.6px;background:#94a0c8;"></div><div class="a" style="left:40.9px;top:133.3px;width:3.6px;height:3.6px;background:#8c98c0;"></div><div class="a" style="left:44.1px;top:130.0px;width:3.6px;height:3.6px;background:#b0bcdc;"></div><div class="a" style="left:44.1px;top:133.3px;width:3.6px;height:3.6px;background:#b0bcdc;"></div><div class="a" style="left:44.1px;top:136.6px;width:3.6px;height:3.6px;background:#d8d8e4;"></div><div class="a" style="left:47.4px;top:130.0px;width:3.6px;height:3.6px;background:#8490bc;"></div><div class="a" style="left:47.4px;top:136.6px;width:3.6px;height:3.6px;background:#8c98c0;"></div><div class="a" style="left:50.7px;top:133.3px;width:3.6px;height:3.6px;background:#8c98c0;"></div><div class="a" style="left:50.7px;top:136.6px;width:3.6px;height:3.6px;background:#b8c4e0;"></div><div class="a" style="left:53.9px;top:130.0px;width:3.6px;height:3.6px;background:#c8ccdc;"></div><div class="a" style="left:53.9px;top:133.3px;width:3.6px;height:3.6px;background:#7c88b4;"></div><div class="a" style="left:53.9px;top:136.6px;width:3.6px;height:3.6px;background:#8490bc;"></div><div class="a" style="left:57.2px;top:130.0px;width:3.6px;height:3.6px;background:#b0bcdc;"></div><div class="a" style="left:57.2px;top:136.6px;width:3.6px;height:3.6px;background:#8c98c0;"></div><div class="a" style="left:60.4px;top:130.0px;width:3.6px;height:3.6px;background:#8c98c0;"></div><div class="a" style="left:63.7px;top:130.0px;width:3.6px;height:3.6px;background:#94a0c8;"></div><div class="a" style="left:63.7px;top:136.6px;width:3.6px;height:3.6px;background:#8490bc;"></div><div class="a" style="left:67.0px;top:133.3px;width:3.6px;height:3.6px;background:#8c98c0;"></div><div class="a" style="left:67.0px;top:136.6px;width:3.6px;height:3.6px;background:#94a0c8;"></div><div class="a" style="left:70.2px;top:130.0px;width:3.6px;height:3.6px;background:#b8c4e0;"></div><div class="a" style="left:70.2px;top:136.6px;width:3.6px;height:3.6px;background:#c8ccdc;"></div><div class="a" style="left:73.5px;top:130.0px;width:3.6px;height:3.6px;background:#d8d8e4;"></div><div class="a" style="left:73.5px;top:133.3px;width:3.6px;height:3.6px;background:#a4b0d4;"></div><div class="a" style="left:73.5px;top:136.6px;width:3.6px;height:3.6px;background:#8490bc;"></div><div class="a" style="left:76.7px;top:130.0px;width:3.6px;height:3.6px;background:#94a0c8;"></div></div></div>
<div class="a" style="left:913px;top:431px;width:1px;height:17px;background:#8c8c94;"></div>
<div class="a" style="left:914px;top:432px;width:239px;height:15px;background:#58b1fb;"></div>
<div class="t" style="left:915px;top:433px;color:#fff;letter-spacing:-0.7px;">2BKPH</div>
<div class="a" style="left:913px;top:560px;width:1px;height:10px;background:#8c8c94;"></div>
</div>

</body>
</html>
